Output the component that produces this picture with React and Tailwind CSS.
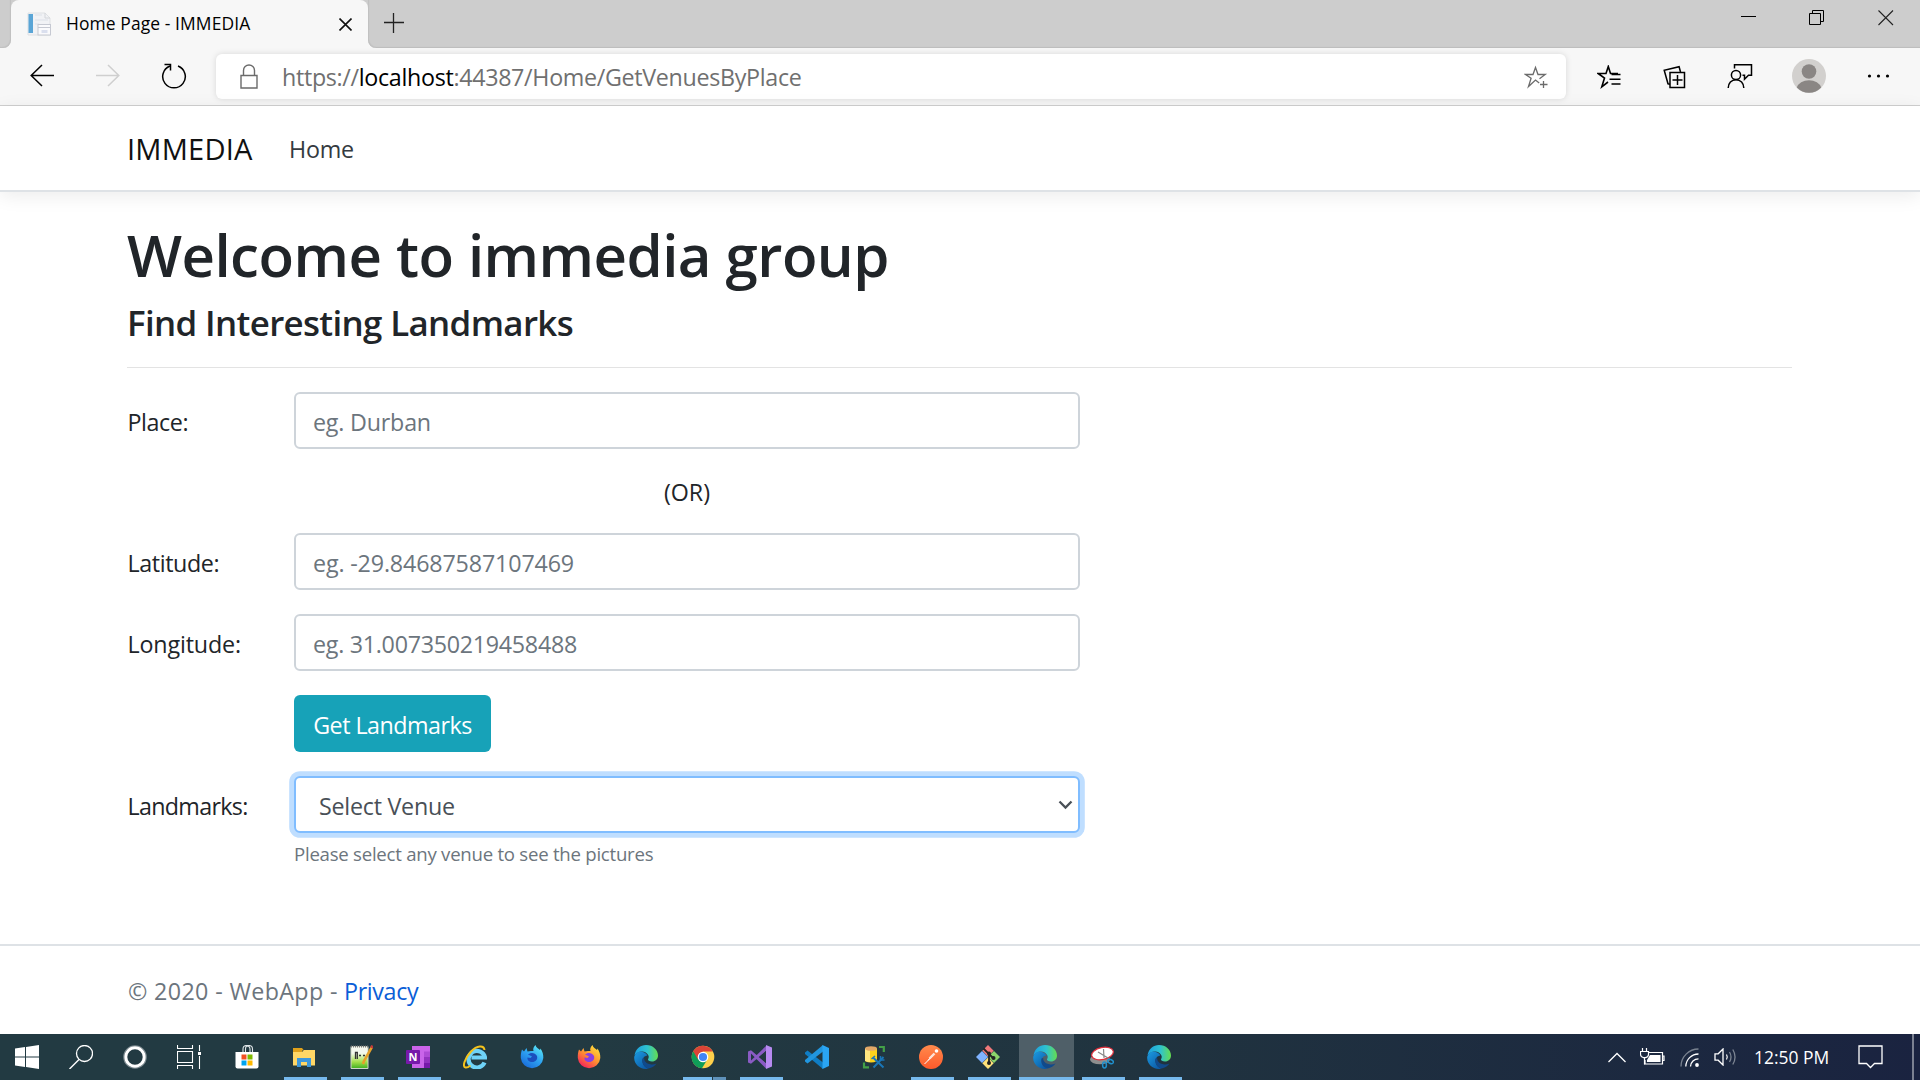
import React from "react";

const SANS = "font-['Open_Sans','Noto_Sans',sans-serif]";
const HEAD = "font-['Open_Sans','Noto_Sans',sans-serif] font-semibold";

function Svg({ w = 24, h = 24, vb, className = "", children, ...rest }) {
  return (
    <svg
      width={w}
      height={h}
      viewBox={vb || `0 0 ${w} ${h}`}
      fill="none"
      className={`shrink-0 ${className}`}
      {...rest}
    >
      {children}
    </svg>
  );
}

/* ---------- Browser chrome ---------- */

function Favicon() {
  return (
    <Svg w={24} h={24}>
      <path d="M1 1h17l5 5v17H1z" fill="#f1f2f5" stroke="#dfe1e4" strokeWidth="1" />
      <path d="M18 1v5h5" stroke="#d3d6da" />
      <rect x="1.5" y="2" width="4.5" height="19" fill="#5aa5d6" />
      <path d="M8 3h7M8 8h13M8 12h4" stroke="#dde1e8" />
      <rect x="11" y="12.500" width="12.500" height="10.500" fill="#fafafc" stroke="#c6c9d2" />
      <path d="M11 15.500h12.500" stroke="#c6c9d2" />
      <rect x="14.500" y="18" width="6" height="3" fill="#dadfee" />
    </Svg>
  );
}

function TabStrip() {
  return (
    <div className="flex h-12 bg-[#cdcdcd] shadow-[inset_0_-2px_1px_-1px_#bdbdbd]">
      <div className="w-[11px] h-12 bg-[#f7f7f7]">
        <div className="h-12 rounded-br-lg bg-[#cdcdcd] shadow-[inset_-1px_-1px_1px_#c0c0c0]" />
      </div>
      <div className="flex w-[357px] items-center rounded-t-lg bg-[#f7f7f7] pl-4">
        <Favicon />
        <span className="ml-[15px] w-[273px] whitespace-nowrap text-[17.46px] leading-none tracking-[0.1px] text-black">
          Home Page - IMMEDIA
        </span>
        <Svg w={13} h={13}>
          <path d="M0.500 0.500l12 12M12.500 0.500l-12 12" stroke="#111" strokeWidth="1.600" />
        </Svg>
      </div>
      <div className="h-12 w-2 bg-[#f7f7f7]">
        <div className="h-12 rounded-bl-lg bg-[#cdcdcd] shadow-[inset_1px_-1px_1px_#c0c0c0]" />
      </div>
      <div className="flex grow items-start justify-between pl-2">
        <Svg w={20} h={20} className="mt-[13px]">
          <path d="M0 9.500h20M9.500 0v20" stroke="#222" strokeWidth="1.300" />
        </Svg>
        <div className="mt-[10px] flex pr-[26px]">
          <Svg w={16} h={16} className="mr-[52px]">
            <path d="M0 6.500h15" stroke="#000" />
          </Svg>
          <Svg w={16} h={16} className="mr-[53px]">
            <path d="M0.500 3.500h11v11h-11zM3.500 3.500v-3h11v11h-3" stroke="#000" />
          </Svg>
          <Svg w={16} h={16}>
            <path d="M0.500 0.500l14.500 14.500M15 0.500L0.500 15" stroke="#222" strokeWidth="1.100" />
          </Svg>
        </div>
      </div>
    </div>
  );
}

function AddressBar() {
  return (
    <div className="flex h-[45px] w-[1350px] items-center rounded-md bg-white pl-6 pr-[18px] shadow-[0_0_6px_rgba(0,0,0,0.13)]">
      <Svg w={18} h={26}>
        <path d="M1 11.500h16v12.500H1z" stroke="#6b6b6b" strokeWidth="1.400" />
        <path d="M3.500 11.500V6.500a5.500 5.500 0 0 1 11 0v5" stroke="#6b6b6b" strokeWidth="1.400" />
      </Svg>
      <span className="ml-[24px] mt-[3px] grow whitespace-nowrap text-[23.28px] leading-none tracking-[-0.32px] text-[#707070]">
        https://<span className="text-black">localhost</span>:44387/Home/GetVenuesByPlace
      </span>
      <Svg w={24} h={24}>
        <path
          d="M15.200 17l-3.700-3-7 6.500 2.600-8.200L1.500 8.500h7.500L11.500 1.500l2.500 7h7.200l-5.700 4.200"
          transform="translate(0 1)"
          stroke="#6b6b6b"
          strokeWidth="1.300"
        />
        <path d="M19.500 16v7M16 19.500h7.500" stroke="#6b6b6b" strokeWidth="1.300" />
      </Svg>
    </div>
  );
}

function Toolbar() {
  return (
    <div className="flex h-[58px] items-center border-b border-[#cfcfcf] bg-[#f7f7f7] pl-[30px]">
      <Svg w={24} h={24} className="-mt-px">
        <path d="M12 1L1.200 11.500 12 22M1.200 11.500H24" stroke="#000" strokeWidth="1.500" />
      </Svg>
      <Svg w={24} h={24} className="ml-[42px] -mt-px">
        <path d="M12 1l10.800 10.500L12 22M22.800 11.500H0" stroke="#cfcfcf" strokeWidth="1.500" />
      </Svg>
      <Svg w={26} h={26} className="ml-[41px] mr-[29px] -mt-px">
        <path d="M9 3A11.300 11.300 0 1 0 17 3" stroke="#000" strokeWidth="1.500" />
        <path d="M3.500 1.500h6v6" stroke="#000" strokeWidth="1.500" />
      </Svg>
      <AddressBar />
      <Svg w={24} h={24} className="ml-[31px]">
        <path
          d="M21 8.500h-7.500L11.300 1.500 9 8.500H1.200l6.300 4.500-2.700 8.800 6.200-4.800"
          stroke="#000"
          strokeWidth="1.600"
        />
        <path d="M14.500 9.500h9M12.500 14.300h11M14.500 19h9" stroke="#000" strokeWidth="1.600" />
      </Svg>
      <Svg w={24} h={24} className="ml-[42px]">
        <path d="M7 7.500h14.500v15H7z" stroke="#000" strokeWidth="1.500" />
        <path d="M9.500 15h10M14.500 10v10" stroke="#000" strokeWidth="1.500" />
        <path d="M17.500 7l-1.400-5.300L1.200 5.300 5 18.800l2 .4" stroke="#000" strokeWidth="1.500" />
      </Svg>
      <Svg w={26} h={26} className="ml-[40px] -mt-px">
        <circle cx="9" cy="12" r="4.600" stroke="#000" strokeWidth="1.500" />
        <path d="M1.200 25c0-5 3.300-8.300 7.800-8.300S16.800 20 16.800 25" stroke="#000" strokeWidth="1.500" />
        <path d="M7.500 5.500V1.800h17v10.500h-3l-4 4v-4h-2" stroke="#000" strokeWidth="1.500" />
      </Svg>
      <Svg w={34} h={34} className="ml-[39px] -mt-px">
        <circle cx="17" cy="17" r="17" fill="#d2d0ce" />
        <circle cx="17" cy="12.500" r="7.300" fill="#8a8684" />
        <path d="M4.800 28.600a12.500 9.500 0 0 1 24.400 0A17 17 0 0 1 4.800 28.600z" fill="#8a8684" />
      </Svg>
      <Svg w={24} h={6} className="ml-[41px] -mt-px">
        <circle cx="2.500" cy="3" r="1.600" fill="#000" />
        <circle cx="11.500" cy="3" r="1.600" fill="#000" />
        <circle cx="20.500" cy="3" r="1.600" fill="#000" />
      </Svg>
    </div>
  );
}

/* ---------- Page ---------- */

function Field({ label, labelClass = "", children, className = "" }) {
  return (
    <div className={`flex ${className}`}>
      <label className={`-ml-px w-[167px] shrink-0 whitespace-nowrap pl-[0.5px] leading-[60px] h-[57px] ${labelClass}`}>
        {label}
      </label>
      <div className="w-[786px]">{children}</div>
    </div>
  );
}

function TextBox({ placeholder, textClass }) {
  return (
    <input
      placeholder={placeholder}
      className={`block h-[57px] w-full rounded-md border-2 border-[#ced4da] bg-white px-[17px] pt-[3px] text-[23.28px] leading-[50px] text-[#495057] placeholder:text-[#6c757d] ${textClass}`}
    />
  );
}

function Page() {
  return (
    <div className="flex h-[928px] flex-col bg-white text-[23.28px] text-[#212529]">
      <nav className="flex h-[86px] shrink-0 items-center border-b-2 border-[#dee2e6] pl-[127px] shadow-[0_4px_18px_rgba(0,0,0,0.08)]">
        <span className="w-[162px] pt-[3px] text-[29.1px] leading-none tracking-[0.2px] text-[#111]">IMMEDIA</span>
        <span className="pt-[4px] leading-none tracking-[-0.2px] text-[#343a40]">Home</span>
      </nav>

      <main className="pl-[127px] pt-6">
        <h1 className={`mt-[4px] h-[72px] whitespace-nowrap text-[58.2px] leading-[69px] tracking-[-0.55px] ${HEAD}`}>
          Welcome to immedia group
        </h1>
        <h2 className={`mt-[12px] h-[43px] whitespace-nowrap text-[34.9px] leading-[37px] tracking-[-0.65px] ${HEAD}`}>
          Find Interesting Landmarks
        </h2>
        <hr className="mt-5 w-[1665px] border-t border-[#e3e3e3]" />
        <div className="mt-6 ml-px">
          <Field label="Place:" labelClass="tracking-[-0.4px]">
            <TextBox placeholder="eg. Durban" textClass="tracking-[-0.2px]" />
          </Field>
          <p className="ml-[166px] h-[84px] w-[786px] text-center leading-[87px]">(OR)</p>
          <Field label="Latitude:" labelClass="tracking-[-0.4px]">
            <TextBox placeholder="eg. -29.84687587107469" textClass="tracking-[-0.15px]" />
          </Field>
          <Field label="Longitude:" labelClass="tracking-[-0.15px]" className="mt-6">
            <TextBox placeholder="eg. 31.007350219458488" textClass="tracking-[-0.28px]" />
          </Field>
          <Field label="" className="mt-6">
            <button className="block h-[57px] w-[197px] whitespace-nowrap rounded-md bg-[#17a2b8] pt-[3px] text-center leading-[54px] tracking-[-0.5px] text-white">
              Get Landmarks
            </button>
          </Field>
          <Field label="Landmarks:" labelClass="tracking-[-0.68px]" className="mt-6">
            <div className="flex h-[57px] items-center justify-between rounded-md border-2 border-[#80bdff] bg-white pl-[23px] pr-[5px] shadow-[0_0_0_4.8px_#bfdeff]">
              <span className="pt-[3px] tracking-[-0.25px] text-[#495057]">Select Venue</span>
              <Svg w={15} h={10}>
                <path d="M1.500 1.500l6 6 6-6" stroke="#495057" strokeWidth="2.300" />
              </Svg>
            </div>
            <small className="mt-[7px] block h-7 whitespace-nowrap text-[18.62px] leading-7 tracking-[-0.25px] text-[#6c757d]">
              Please select any venue to see the pictures
            </small>
          </Field>
        </div>
      </main>

      <footer className="mt-auto flex h-[90px] shrink-0 items-center border-t-2 border-[#dee2e6] pl-[128px] pt-[3px] text-[#6c757d]">
        <span className="w-[216px] whitespace-nowrap tracking-[0.36px]">© 2020 - WebApp -</span>
        <a className="tracking-[-0.35px] text-[#0b5ed7]">Privacy</a>
      </footer>
    </div>
  );
}

/* ---------- Taskbar icons ---------- */

const WindowsLogo = () => (
  <Svg>
    <path d="M0 3.500l10-1.400v9.300H0zM11 2l13-2v11.400H11zM0 12.500h10v9.400L0 20.500zM11 12.500h13V24l-13-2z" fill="#fff" />
  </Svg>
);
const SearchIcon = () => (
  <Svg>
    <circle cx="15.500" cy="8.500" r="8" stroke="#fff" strokeWidth="1.300" />
    <path d="M10 14.500L0.500 24" stroke="#fff" strokeWidth="1.400" />
  </Svg>
);
const Cortana = () => (
  <Svg>
    <circle cx="12" cy="12" r="11.200" stroke="#7c8a90" strokeWidth="1.200" />
    <circle cx="12" cy="12" r="9.200" stroke="#fff" strokeWidth="3" />
  </Svg>
);
const TaskView = () => (
  <Svg>
    <path d="M0.500 6.500h15v11h-15zM0.500 0v3.500h15V0M0.500 24v-3.500h15V24M22.500 0v6M22.500 11v13" stroke="#fff" strokeWidth="1.100" />
    <rect x="21" y="7" width="3" height="3" fill="#fff" />
  </Svg>
);
const Store = () => (
  <Svg>
    <path d="M0.500 7h23v14.500q0 2-2 2h-19q-2 0-2-2z" fill="#fff" />
    <path d="M8 7V4a3.500 3.500 0 0 1 7 0v3M10.500 7V4a3.500 3.500 0 0 1 7 0v3" stroke="#dfe5e8" strokeWidth="1.100" />
    <path d="M6.500 9.500h5v5h-5z" fill="#f25022" />
    <path d="M12.500 9.500h5v5h-5z" fill="#7fba00" />
    <path d="M6.500 15.500h5v5h-5z" fill="#00a4ef" />
    <path d="M12.500 15.500h5v5h-5z" fill="#ffb900" />
  </Svg>
);
const Explorer = () => (
  <Svg>
    <path d="M1 3h9l2 2.500h-2V9H1z" fill="#e0a11b" />
    <path d="M1 7h9l2-2h11v15.500H1z" fill="#ffd766" />
    <path d="M5 22v-9h14v9h-4v-5H9v5z" fill="#3d98dc" />
  </Svg>
);
const NotepadPlus = () => (
  <Svg>
    <defs>
      <linearGradient id="np" x1="0" y1="0" x2="0" y2="1">
        <stop offset="0.300" stopColor="#f4f8ee" />
        <stop offset="0.700" stopColor="#a4e04a" />
        <stop offset="1" stopColor="#3fae22" />
      </linearGradient>
    </defs>
    <path d="M2 1.500h17v22H2z" fill="url(#np)" stroke="#cdd6c8" />
    <path d="M2 1.500h17" stroke="#777" strokeDasharray="1 1" strokeWidth="2" />
    <path d="M6.500 14V7.500h1.800V14M10 10.500h2M14 10.500h2" stroke="#333" strokeWidth="1.300" />
    <path d="M23 2L15 16l-1 3" stroke="#e6a12a" strokeWidth="2.600" />
    <path d="M23.500 0.500l-1 2.500" stroke="#c43a3a" strokeWidth="2.800" />
  </Svg>
);
const OneNote = () => (
  <Svg>
    <rect x="6" y="1" width="18" height="22" fill="#ca64ea" />
    <path d="M18 6.500h6V12h-6z" fill="#ae4bd5" />
    <path d="M18 12h6v5.500h-6z" fill="#9332bf" />
    <path d="M18 17.500h6V23h-6z" fill="#7719aa" />
    <rect x="0" y="5" width="14" height="14" rx="1" fill="#7719aa" />
    <text x="7" y="16" textAnchor="middle" fill="#fff" className="text-[11px] font-bold font-['Open_Sans',sans-serif]">N</text>
  </Svg>
);
const InternetExplorer = () => (
  <Svg>
    <path d="M21.500 17.500A8.300 8.300 0 1 1 22 12.500H8.500" stroke="#6fd3f8" strokeWidth="4.200" />
    <path d="M21.500 5C21 0 14 0 8 6.500 1.500 13.500-1 22 2.500 22.500c1.500.3 3.500-.8 5-2" stroke="#f4c21c" strokeWidth="2" />
  </Svg>
);
function Firefox({ id, a, b, c, core }) {
  return (
    <Svg>
      <defs>
        <linearGradient id={id} x1="0.900" y1="0" x2="0.200" y2="1">
          <stop offset="0" stopColor={a} />
          <stop offset="0.500" stopColor={b} />
          <stop offset="1" stopColor={c} />
        </linearGradient>
      </defs>
      <path d="M2 4.500L4 6.500 6.500 3l1 3.500c2-1 5-.5 6-.5C12.500 3.500 14 1.500 15.500 0c.5 2.500 3 3.500 4.500 5l.5-1.500c2 3 3 6 2.800 9.500A11.300 11.300 0 0 1 .8 13C.7 9.500 1 7 2 4.500z" fill={`url(#${id})`} />
      <path d="M8 9.500c2-2 7-2.500 9 1.500 1 3.500-1.500 6-4.800 6-3 0-5.200-2-4.700-4.500l3 .5 1.500-1.500z" fill={core} />
    </Svg>
  );
}
function Edge({ id }) {
  return (
    <Svg>
      <defs>
        <linearGradient id={`${id}a`} x1="0" y1="0.400" x2="1" y2="0.400">
          <stop offset="0" stopColor="#1c9fe0" />
          <stop offset="0.550" stopColor="#2fc2cf" />
          <stop offset="1" stopColor="#65dd4f" />
        </linearGradient>
        <linearGradient id={`${id}b`} x1="0" y1="0" x2="0.800" y2="1">
          <stop offset="0" stopColor="#1b9be2" />
          <stop offset="1" stopColor="#0c59a4" />
        </linearGradient>
      </defs>
      <path d="M0.500 10.500C1.500 4 6.500 0 12 0c7 0 12 5 12 10.500 0 3.500-2.500 6-6 6-2.500 0-4.500-1-4-2.200.8-1.500 1-2.500.3-4C13 7.500 10 6 7 6.500c-3 .6-5 2-6.500 4z" fill={`url(#${id}a)`} />
      <path d="M0.300 11.500C1.500 8 5 6.200 8 6.700c3.500.5 5 2.500 5.300 4-2.500-.2-4.800 2-4.800 5 0 4 3 7 6 7.800-1 .4-2 .5-3 .5C5 24-.7 18 .3 11.500z" fill={`url(#${id}b)`} />
      <path d="M8.500 13.500C7.500 18 10 23 14.500 23.500c3.500-.6 6.300-2.500 8-5-2 .9-4 1.200-6 .8-4-.5-6.500-3.200-6.300-6.300z" fill="#114a8b" />
    </Svg>
  );
}
const Chrome = () => (
  <Svg>
    <circle cx="12" cy="12" r="11.300" fill="#ffd04b" />
    <path d="M12 12L2.200 6.300A11.300 11.300 0 0 0 11 23.300l5-8.300z" fill="#0f9d58" />
    <path d="M12 6.500h9.800A11.300 11.300 0 0 0 2.200 6.300L7 14.500z" fill="#db4437" />
    <circle cx="12" cy="12" r="5.300" fill="#fff" />
    <circle cx="12" cy="12" r="4.100" fill="#4285f4" />
  </Svg>
);
const VisualStudio = () => (
  <Svg>
    <path d="M0 6.500l3-1.300L18 18v5.500L3 8.500v7L18 1v5L3 18.700l-3-1.200z" fill="#8a5bc4" />
    <path d="M18 0l6 2.500v19L18 24z" fill="#b78af0" />
    <path d="M18 6v12l-7-6z" fill="#223840" />
  </Svg>
);
const VSCode = () => (
  <Svg>
    <path d="M0 7.500l2.500-2L18 17.500V24L0 9z" fill="#0f7dc4" />
    <path d="M0 16.500l2.500 2L18 6.500V0L0 15z" fill="#2196df" />
    <path d="M17.500 0L24 3v18l-6.500 3z" fill="#2aa5f3" />
  </Svg>
);
const SqlTools = () => (
  <Svg>
    <path d="M3 3.500h12V16q-6 3-12 0z" fill="#fbd21c" />
    <path d="M3 3.500h5V17q-3 0-5-1z" fill="#ffe680" />
    <ellipse cx="9" cy="3.500" rx="6" ry="2.300" fill="#e3a868" />
    <path d="M17 2h4.800v5M2 17.500v4.800h5" stroke="#43a047" strokeWidth="2.200" />
    <path d="M11 12.500l10.500 10M21.500 12L11.500 22.500" stroke="#1976b8" strokeWidth="2" />
    <path d="M9.500 14l3.500-3M18.500 11v4h4" stroke="#1976b8" strokeWidth="1.500" />
  </Svg>
);
const Postman = () => (
  <Svg>
    <defs>
      <linearGradient id="pm" x1="0" y1="0" x2="0" y2="1">
        <stop offset="0" stopColor="#ff8a4c" />
        <stop offset="1" stopColor="#ff5a2b" />
      </linearGradient>
    </defs>
    <circle cx="12" cy="12" r="12" fill="url(#pm)" />
    <path d="M5.500 19l8.500-8.500M9 15.500l5-6" stroke="#fff" strokeWidth="1" />
    <path d="M10.500 13.500l5-5" stroke="#ffe2d6" strokeWidth="2.400" />
    <circle cx="17.500" cy="6" r="1.800" fill="#fff" />
  </Svg>
);
const GitBash = () => (
  <Svg>
    <path d="M12 0l5.700 5.700L12 11.500 6.300 5.700z" fill="#f0787a" />
    <path d="M18 6l6 6-6 6-6-6z" fill="#8bd36b" />
    <path d="M12 12.500l5.700 5.700L12 24l-5.700-5.800z" fill="#ffe27a" />
    <path d="M6 6l6 6-6 6-6-6z" fill="#80b3ff" />
    <path d="M7.500 3.500L13 9v10M13 9l4 4" stroke="#222" strokeWidth="1.800" />
    <circle cx="13" cy="8.500" r="2" fill="#222" />
    <circle cx="13" cy="18" r="2" fill="#222" />
    <circle cx="17.500" cy="13" r="2" fill="#222" />
  </Svg>
);
const Snip = () => (
  <Svg>
    <ellipse cx="10" cy="14.500" rx="10" ry="4.800" fill="#8e8e8e" />
    <ellipse cx="12.500" cy="8.500" rx="11" ry="6" transform="rotate(-12 12.500 8.500)" fill="#fff" stroke="#e0303c" strokeWidth="1.200" />
    <path d="M8 7l10 6M13.500 4l.5 9" stroke="#888" strokeWidth="1.200" />
    <ellipse cx="14.500" cy="20" rx="1.900" ry="3" stroke="#2090cc" strokeWidth="1.500" />
    <ellipse cx="20.500" cy="16.500" rx="3" ry="1.900" transform="rotate(25 20.500 16.500)" stroke="#2090cc" strokeWidth="1.500" />
  </Svg>
);

const APPS = [
  { icon: <Store /> },
  { icon: <Explorer />, open: true },
  { icon: <NotepadPlus />, open: true },
  { icon: <OneNote />, open: true },
  { icon: <InternetExplorer /> },
  { icon: <Firefox id="ffd" a="#5ff0f8" b="#2ea3f2" c="#1868d8" core="#1b4fbe" /> },
  { icon: <Firefox id="ff" a="#ffe83c" b="#ff9430" c="#f5185e" core="#8a3fe0" /> },
  { icon: <Edge id="e1" /> },
  { icon: <Chrome />, stacked: true },
  { icon: <VisualStudio />, open: true },
  { icon: <VSCode /> },
  { icon: <SqlTools /> },
  { icon: <Postman />, open: true },
  { icon: <GitBash />, open: true },
  { icon: <Edge id="e2" />, active: true },
  { icon: <Snip />, open: true },
  { icon: <Edge id="e3" />, open: true },
];

function AppSlot({ icon, open, active, stacked }) {
  return (
    <div className={`mr-[2px] flex h-[46px] w-[55px] flex-col items-center ${active ? "bg-[#4f5f68]" : ""}`}>
      <div className="flex h-[43px] items-center pr-[3px] pt-[3px]">{icon}</div>
      {open && <div className="h-[3px] w-[43px] bg-[#76b9ed]" />}
      {active && <div className="h-[3px] w-full bg-[#76b9ed]" />}
      {stacked && (
        <div className="flex h-[3px] w-[43px] gap-px">
          <div className="w-[29px] bg-[#76b9ed]" />
          <div className="grow bg-[#5f92ba]" />
        </div>
      )}
    </div>
  );
}

function Taskbar() {
  return (
    <div className="flex h-[46px] bg-linear-to-r from-[#223a42] from-30% via-[#20333f] via-60% to-[#1a2340]">
      <div className="flex w-[221px] items-center gap-[30px] pl-[15px]">
        <WindowsLogo />
        <SearchIcon />
        <Cortana />
        <TaskView />
      </div>
      <div className="flex">
        {APPS.map((app, i) => (
          <AppSlot key={i} {...app} />
        ))}
      </div>
      <div className="ml-auto flex items-center">
        <Svg w={18} h={11} className="mr-[14px]">
          <path d="M0.500 10L9 1.500l8.500 8.500" stroke="#fff" strokeWidth="1.300" />
        </Svg>
        <Svg w={26} h={18} className="mr-[14px]">
          <path d="M8 4.500h14.500v11.500H5V12M22.500 8h1.500v4.500h-1.500" stroke="#fff" strokeWidth="1.200" />
          <path d="M10 7h10.500v7H7v-2z" fill="#fff" />
          <path d="M2.500 0v3.500M6.500 0v3.500M0.500 3.500h8v3a3.500 3.500 0 0 1-3 3.200h-2a3.500 3.500 0 0 1-3-3.200zM4.500 10v6.500" stroke="#fff" strokeWidth="1.200" />
        </Svg>
        <Svg w={19} h={19} className="mr-[15px]">
          <path d="M1 18.500A17.500 17.500 0 0 1 18.500 1" stroke="#79828f" strokeWidth="1.300" />
          <path d="M5.800 18.500A12.700 12.700 0 0 1 18.500 6M10.500 18.500A8 8 0 0 1 18.500 10.800" stroke="#fff" strokeWidth="1.300" />
          <circle cx="17" cy="17" r="1.900" fill="#fff" />
        </Svg>
        <Svg w={23} h={18} className="mr-[18px]">
          <path d="M1 5.800h3.200L9 1v16l-4.800-4.800H1z" stroke="#fff" strokeWidth="1.300" />
          <path d="M12.500 6.500q1.500 2.500 0 5" stroke="#fff" strokeWidth="1.200" />
          <path d="M15.500 4q3 5 0 10M18.800 1.500q4.500 7.500 0 15" stroke="#7c8592" strokeWidth="1.300" />
        </Svg>
        <span className="-ml-px w-[104px] whitespace-nowrap pt-[2px] text-[17.46px] leading-none text-white">12:50 PM</span>
        <Svg w={25} h={25} className="mr-[29px] mt-px">
          <path d="M1 1h23v17.500h-7.500l-4 4-4-4H1z" stroke="#fff" strokeWidth="1.300" />
        </Svg>
        <div className="mr-[6px] h-[46px] w-[2px] bg-[#7b8191]" />
      </div>
    </div>
  );
}

export default function App() {
  return (
    <div className={`h-[1080px] w-[1920px] overflow-hidden ${SANS}`}>
      <TabStrip />
      <Toolbar />
      <Page />
      <Taskbar />
    </div>
  );
}
